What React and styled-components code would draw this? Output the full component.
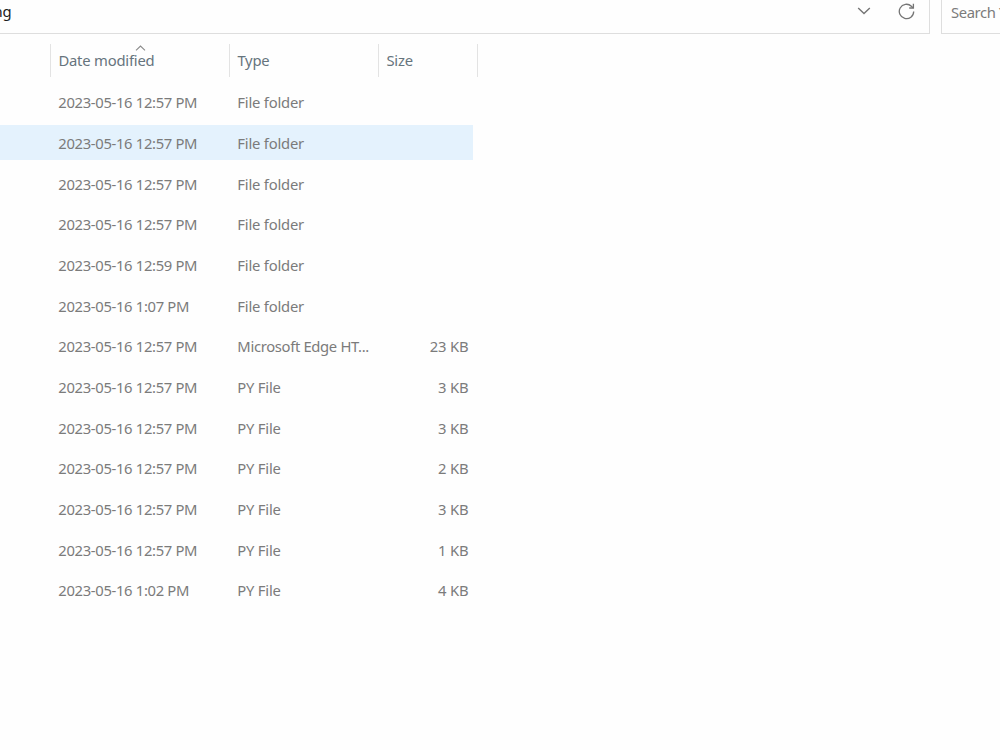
import React from 'react';
import styled, { createGlobalStyle } from 'styled-components';

const GlobalStyle = createGlobalStyle`
  * { box-sizing: border-box; }
  body {
    margin: 0;
    background: #fefefe;
    overflow: hidden;
    font-family: "Segoe UI", "Noto Sans", sans-serif;
    font-size: 14.8px;
    letter-spacing: -0.2px;
    color: #7b7b7b;
  }
`;

const Window = styled.main`
  width: 1000px;
  height: 750px;
  overflow: hidden;
  background: #fefefe;
`;

const TopBar = styled.header`
  display: flex;
  gap: 11px;
  height: 34px;
`;

const AddressBar = styled.div`
  display: flex;
  flex: none;
  align-items: center;
  width: 930px;
  padding: 0 14px 11px 0;
  border: solid #dedede;
  border-width: 0 1px 1px 0;
`;

const PathText = styled.span`
  flex: 1;
  margin-left: -10px;
  color: #1c1c1c;
  line-height: 24px;
`;

const IconButton = styled.button`
  display: flex;
  padding: 0;
  border: 0;
  background: none;
  color: #757575;
  margin-left: ${(p) => p.$gap || 0}px;
`;

const SearchBox = styled.div`
  flex: none;
  width: 80px;
  padding-left: 9px;
  border: solid #dedede;
  border-width: 0 0 1px 1px;
  line-height: 25px;
  letter-spacing: -0.4px;
  white-space: nowrap;
`;

const columns = '179px 149px 99px';

const HeaderRow = styled.div`
  display: grid;
  grid-template-columns: ${columns};
  width: 478px;
  height: 33px;
  margin-top: 10px;
  padding-left: 50px;
  border-right: 1px solid #e3e3e3;
`;

const HeaderCell = styled.div`
  position: relative;
  padding-left: 7.4px;
  border-left: 1px solid #e3e3e3;
  color: #66747d;
  line-height: 33px;
`;

const SortMark = styled.svg`
  position: absolute;
  top: 1px;
  left: 84px;
`;

const Rows = styled.div`
  display: flex;
  flex-direction: column;
  gap: 5.67px;
  padding-top: 7.4px;
`;

const FileRow = styled.div`
  display: grid;
  grid-template-columns: ${columns};
  width: 473px;
  height: 35px;
  padding-left: 50.5px;
  background: ${(p) => (p.$active ? '#e4f2fd' : 'transparent')};
`;

const Cell = styled.span`
  padding-left: 7.8px;
  line-height: 36.4px;
  white-space: nowrap;
  letter-spacing: ${(p) => p.$spacing || -0.2}px;
`;

const SizeCell = styled(Cell)`
  padding: 0 9.2px 0 0;
  text-align: right;
`;

const folder = 'File folder';
const py = 'PY File';
const files = [
  ['2023-05-16 12:57 PM', folder],
  ['2023-05-16 12:57 PM', folder],
  ['2023-05-16 12:57 PM', folder],
  ['2023-05-16 12:57 PM', folder],
  ['2023-05-16 12:59 PM', folder],
  ['2023-05-16 1:07 PM', folder],
  ['2023-05-16 12:57 PM', 'Microsoft Edge HT...', '23 KB'],
  ['2023-05-16 12:57 PM', py, '3 KB'],
  ['2023-05-16 12:57 PM', py, '3 KB'],
  ['2023-05-16 12:57 PM', py, '2 KB'],
  ['2023-05-16 12:57 PM', py, '3 KB'],
  ['2023-05-16 12:57 PM', py, '1 KB'],
  ['2023-05-16 1:02 PM', py, '4 KB'],
];

export default function App() {
  return (
    <Window>
      <GlobalStyle />
      <TopBar>
        <AddressBar>
          <PathText>ing</PathText>
          <IconButton aria-label="Previous locations">
            <svg width="14" height="8" viewBox="0 0 14 8" fill="none" stroke="currentColor" strokeWidth="1.4">
              <path d="M1.2 1 L7 6.6 L12.8 1" />
            </svg>
          </IconButton>
          <IconButton aria-label="Refresh" $gap={27}>
            <svg width="17" height="17" viewBox="0 0 17 17" fill="none" stroke="currentColor" strokeWidth="1.3">
              <path d="M15.7 8.5 A7.2 7.2 0 1 1 13.4 3.2 L15.1 4.9" />
              <path d="M15.4 0.8 V5 H11.2" />
            </svg>
          </IconButton>
        </AddressBar>
        <SearchBox>Search Y</SearchBox>
      </TopBar>
      <HeaderRow>
        <HeaderCell>
          Date modified
          <SortMark width="11" height="6" viewBox="0 0 11 6" fill="none" stroke="#8a8a8a" strokeWidth="1.1">
            <path d="M1 5.3 L5.5 1 L10 5.3" />
          </SortMark>
        </HeaderCell>
        <HeaderCell>Type</HeaderCell>
        <HeaderCell>Size</HeaderCell>
      </HeaderRow>
      <Rows>
        {files.map(([date, type, size], i) => (
          <FileRow key={i} $active={i === 1}>
            <Cell $spacing={-0.33}>{date}</Cell>
            <Cell $spacing={type.length > 12 ? -0.33 : -0.2}>{type}</Cell>
            <SizeCell>{size}</SizeCell>
          </FileRow>
        ))}
      </Rows>
    </Window>
  );
}
